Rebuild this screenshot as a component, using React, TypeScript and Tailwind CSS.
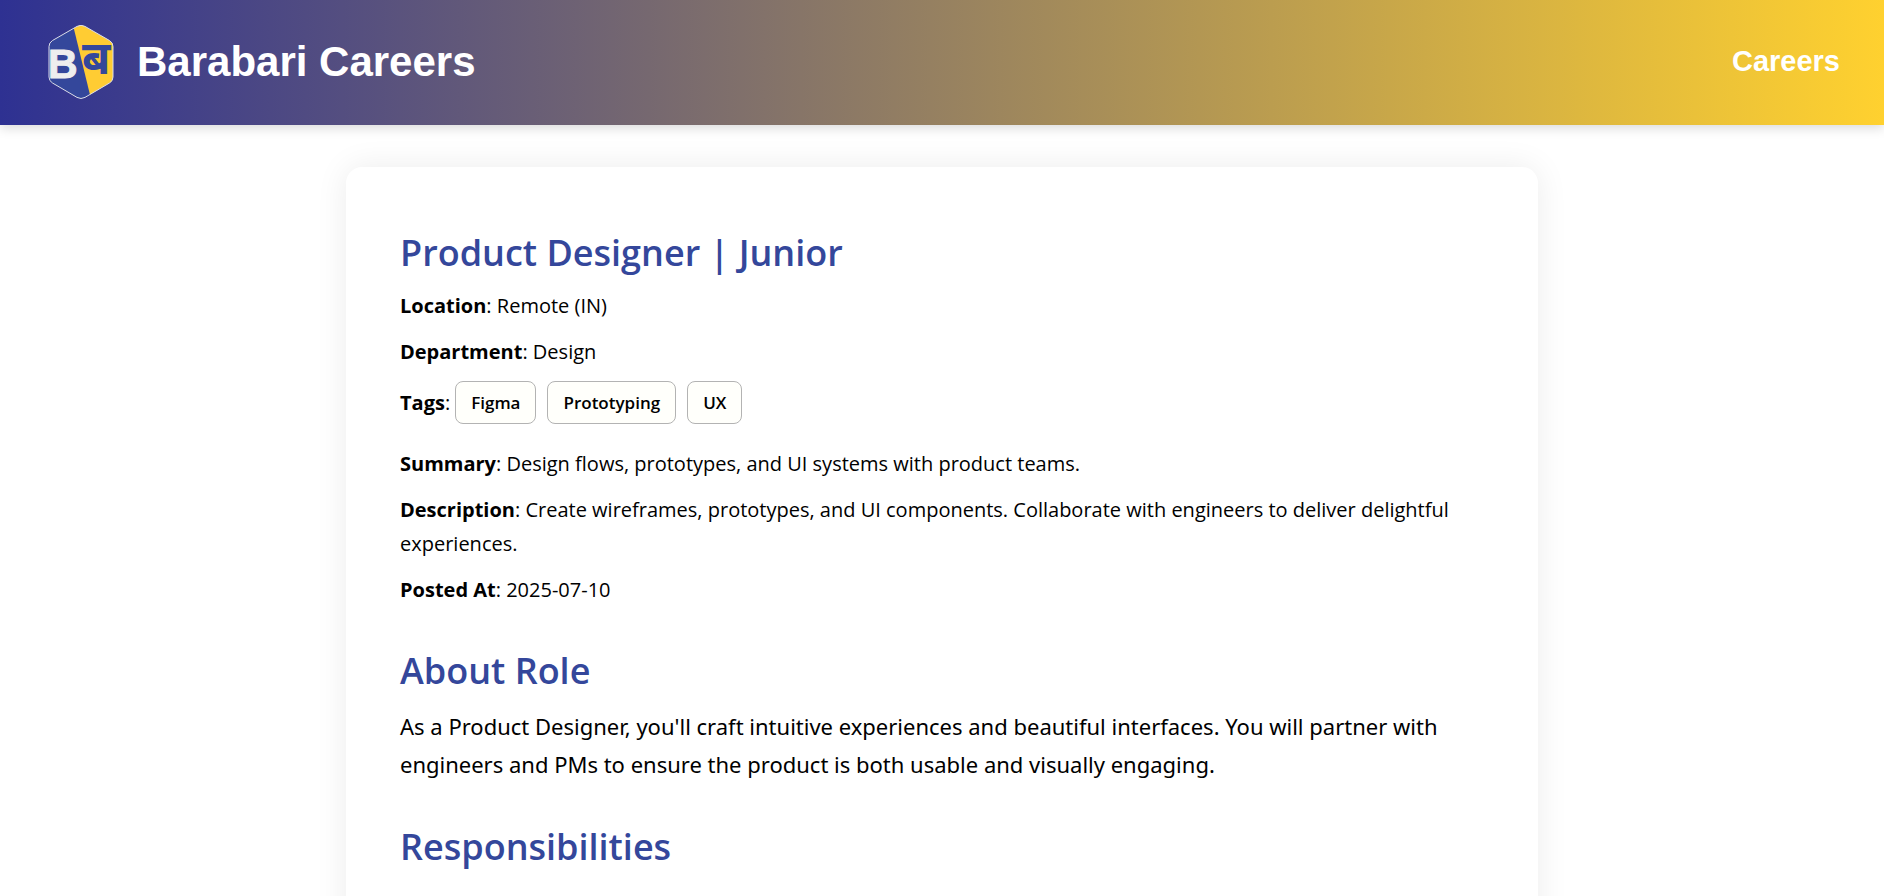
import type { ReactNode } from "react";

const tags = ["Figma", "Prototyping", "UX"];

const hexagon =
  "M29 1.4Q33 -.8 37 1.4L61.5 15.5Q65 17.6 65 21.5V52Q65 56 61.5 58L37 72.4Q33 74.6 29 72.4L4.5 58Q1 56 1 52V21.5Q1 17.6 4.5 15.5Z";

function Logo() {
  return (
    <svg viewBox="0 0 66 74" className="h-[74px] w-[66px]" role="img" aria-label="Barabari">
      <defs>
        <clipPath id="hex">
          <path d={hexagon} />
        </clipPath>
      </defs>
      <g clipPath="url(#hex)">
        <rect width="66" height="74" fill="#34479b" />
        <path d="M25 0H66V74H43Z" fill="#ffcc33" />
      </g>
      <path d={hexagon} fill="none" stroke="#dcdde8" strokeWidth="1" />
      <text
        x="0"
        y="53"
        fontSize="41"
        fontWeight="700"
        fill="#eeeeee"
        stroke="#eeeeee"
        strokeWidth="1"
        className="font-['Liberation_Sans',sans-serif]"
      >
        B
      </text>
      <text
        x="34"
        y="49"
        fontSize="46"
        fontWeight="700"
        fill="#34479b"
        className="font-['Noto_Sans_Devanagari','Noto_Sans',sans-serif]"
      >
        ब
      </text>
    </svg>
  );
}

function Field({ label, children }: { label: string; children: ReactNode }) {
  return (
    <p className="text-[20px] leading-[34px]">
      <strong className="font-bold">{label}</strong>: {children}
    </p>
  );
}

function Heading({ children }: { children: ReactNode }) {
  return <h2 className="mb-[10px] text-[36px] leading-[52px] font-semibold text-[#34479b]">{children}</h2>;
}

export default function App() {
  return (
    <div className="min-h-screen bg-white font-['Open_Sans','Noto_Sans',sans-serif] text-black">
      <header className="flex items-center justify-between bg-linear-to-r/srgb from-[#2e3192] to-[#ffd12f] pt-[25px] pr-11 pb-[26px] pl-12 font-['Liberation_Sans',Arial,sans-serif] font-bold text-white shadow-[0_3px_11px_rgba(0,0,0,0.15)]">
        <div className="flex items-center gap-[23px]">
          <Logo />
          <h1 className="text-[42px] leading-[60px]">Barabari Careers</h1>
        </div>
        <nav>
          <a href="#careers" className="text-[29px]">
            Careers
          </a>
        </nav>
      </header>

      <main className="mx-auto mt-[42px] min-h-screen max-w-[1192px] rounded-2xl bg-white px-[54px] pt-15 pb-14 shadow-[0_0_32px_rgba(0,0,0,0.08)]">
        <section className="mb-[38px]">
          <Heading>Product Designer | Junior</Heading>
          <div className="flex flex-col gap-3">
            <Field label="Location">Remote (IN)</Field>
            <Field label="Department">Design</Field>
            <div className="mb-[11px] flex items-center gap-[5px] text-[20px] leading-[34px]">
              <span>
                <strong className="font-bold">Tags</strong>:
              </span>
              <ul className="flex gap-[11px]">
                {tags.map((tag) => (
                  <li
                    key={tag}
                    className="rounded-lg border border-[#b3b3b3] bg-[#fffffb] px-[15px] text-[17px] leading-[41px] font-semibold"
                  >
                    {tag}
                  </li>
                ))}
              </ul>
            </div>
            <Field label="Summary">Design flows, prototypes, and UI systems with product teams.</Field>
            <Field label="Description">
              Create wireframes, prototypes, and UI components. Collaborate with engineers to deliver delightful
              experiences.
            </Field>
            <Field label="Posted At">2025-07-10</Field>
          </div>
        </section>

        <section className="mb-[38px]">
          <Heading>About Role</Heading>
          <p className="font-['Noto_Sans',sans-serif] text-[22px] leading-[38px]">
            As a Product Designer, you'll craft intuitive experiences and beautiful interfaces. You will partner with
            engineers and PMs to ensure the product is both usable and visually engaging.
          </p>
        </section>

        <section>
          <Heading>Responsibilities</Heading>
        </section>
      </main>
    </div>
  );
}
